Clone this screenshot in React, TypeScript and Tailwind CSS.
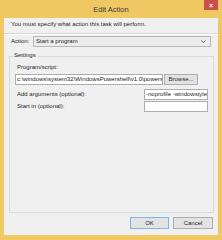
export default function App() {
  return (
    <div className="w-[222px] h-[240px] bg-[#f0c862] flex flex-col font-['Liberation_Sans',Arial,sans-serif] text-[6px] text-[#1e1e1e] overflow-hidden">
      {/* Title bar */}
      <div className="relative h-[18px] flex items-center justify-center">
        <span className="text-[7.5px] text-[#3a3a3a] pt-[1px]">Edit Action</span>
        <div className="absolute right-[4px] top-0 w-[14px] h-[10px] bg-[#c9504c] flex items-center justify-center text-white text-[7px] font-bold leading-none">
          ×
        </div>
      </div>

      {/* Client area */}
      <div className="mx-[4px] mb-[5px] flex-1 bg-[#f0f0f0] flex flex-col">
        <div className="pt-[2px] pl-[7px] h-[10px] leading-[8px]">You must specify what action this task will perform.</div>
        <div className="mt-[5px] h-[2px] border-t border-[#d7d7d7] border-b border-b-white" />

        <div className="mt-[1px] h-[11px] flex items-center pl-[7px] pr-[7px]">
          <span className="w-[22px] shrink-0">Action:</span>
          <div className="flex-1 h-full border border-[#b8b8b8] bg-[#ececec] flex items-center pl-[2px] pr-[4px]">
            <span className="flex-1">Start a program</span>
            <svg width="5" height="3" viewBox="0 0 5 3" className="text-[#555]">
              <path d="M0.5 0.5 L2.5 2.5 L4.5 0.5" fill="none" stroke="currentColor" strokeWidth="0.9" />
            </svg>
          </div>
        </div>

        {/* Settings group */}
        <div className="relative mt-[9px] ml-[5px] mr-[4px] h-[157px] border border-[#dadada] flex flex-col pl-[5px] pr-[5px]">
          <span className="absolute left-[3px] -top-[6px] px-[1px] bg-[#f0f0f0] leading-[8px]">Settings</span>
          <div className="mt-[6px] h-[8px] leading-[8px] pl-[2px]">Program/script:</div>
          <div className="mt-[3px] h-[11px] flex gap-[1px]">
            <div className="w-[148px] h-full bg-white border border-[#abadb3] overflow-hidden whitespace-nowrap flex items-center pl-[1px]">
              c:\windows\system32\WindowsPowershell\v1.0\powershell.exe
            </div>
            <div className="w-[34px] h-full bg-[#e3e3e3] border border-[#adadad] flex items-center justify-center">Browse...</div>
          </div>
          <div className="mt-[4px] h-[11px] flex items-center">
            <span className="flex-1 pl-[2px]">Add arguments (optional):</span>
            <div className="w-[64px] h-full bg-white border border-[#abadb3] overflow-hidden whitespace-nowrap flex items-center pl-[1px]">
              -noprofile -windowstyle hidden
            </div>
          </div>
          <div className="mt-[1px] h-[11px] flex items-center">
            <span className="flex-1 pl-[2px]">Start in (optional):</span>
            <div className="w-[64px] h-full bg-white border border-[#abadb3]" />
          </div>
        </div>

        <div className="mt-[4px] flex justify-end gap-[4px] pr-[5px]">
          <div className="w-[39px] h-[12px] bg-[#e3e3e3] border border-[#7eb4ea] flex items-center justify-center">OK</div>
          <div className="w-[40px] h-[12px] bg-[#e3e3e3] border border-[#adadad] flex items-center justify-center">Cancel</div>
        </div>
      </div>
    </div>
  );
}
